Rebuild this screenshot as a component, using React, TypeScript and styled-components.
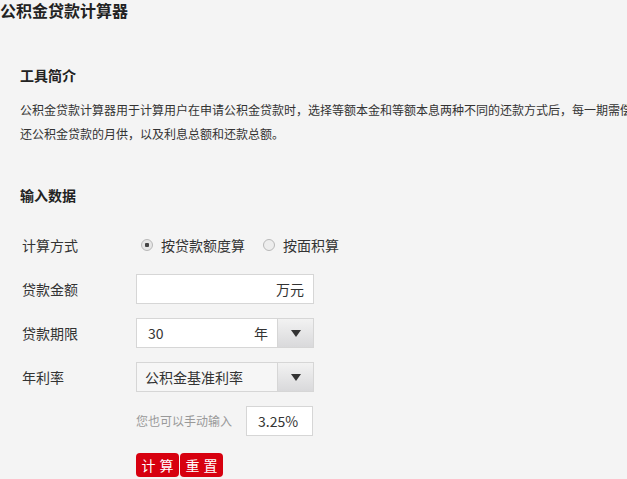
import styled, { createGlobalStyle } from 'styled-components';

const GlobalStyle = createGlobalStyle`
  body {
    margin: 0;
    background: #f4f4f4;
    color: #333;
    font-family: "Noto Sans CJK SC", "Noto Sans", sans-serif;
  }
`;

const Page = styled.div`
  width: 627px;
  height: 479px;
  overflow: hidden;
`;

const PageTitle = styled.h1`
  margin: 0;
  font-size: 16px;
  line-height: 20px;
  font-weight: bold;
  color: #222;
`;

const Section = styled.div`
  padding: 0 20px;
`;

const SectionTitle = styled.h2<{ $top: number }>`
  margin: ${({ $top }) => $top}px 0 0;
  font-size: 14px;
  line-height: 20px;
  font-weight: bold;
  color: #222;
`;

const Intro = styled.p`
  margin: 13px 0 0;
  width: 616px;
  font-size: 12px;
  line-height: 24px;
  color: #333;
`;

const Form = styled.div`
  margin-top: 25px;
  display: flex;
  flex-direction: column;
  gap: 14px;
`;

const Row = styled.div`
  display: flex;
  align-items: center;
  height: 30px;
  padding-left: 2px;
`;

const Label = styled.span`
  width: 114px;
  font-size: 14px;
  line-height: 20px;
`;

const RadioGroup = styled.div`
  display: flex;
  align-items: center;
  padding-left: 5px;
`;

const RadioOption = styled.label`
  display: flex;
  align-items: center;
  font-size: 14px;
  line-height: 20px;
  margin-right: 18px;
`;

const RadioDot = styled.span<{ $checked?: boolean }>`
  box-sizing: border-box;
  width: 12px;
  height: 12px;
  border-radius: 50%;
  border: 1px solid #b8b8b8;
  background: radial-gradient(circle, ${({ $checked }) => ($checked ? '#444 0 2px, #e6e6e6 2.5px' : '#ededed 0')});
  margin-right: 8px;
`;

const Field = styled.div<{ $grey?: boolean; $width?: number }>`
  box-sizing: border-box;
  display: flex;
  align-items: center;
  width: ${({ $width }) => $width ?? 178}px;
  height: 30px;
  border: 1px solid #d6d6d6;
  background: ${({ $grey }) => ($grey ? '#f6f6f6' : '#fff')};
  font-size: 14px;
  line-height: 20px;
`;

const FieldValue = styled.span<{ $left?: number }>`
  flex: 1;
  padding-left: ${({ $left }) => $left ?? 11}px;
`;

const FieldUnit = styled.span`
  padding-right: 9px;
`;

const DropButton = styled.span`
  align-self: stretch;
  width: 35px;
  border-left: 1px solid #d6d6d6;
  background: linear-gradient(#f2f2f2, #d9d9db);
  display: flex;
  align-items: center;
  justify-content: center;
`;

const Arrow = styled.span`
  width: 0;
  height: 0;
  border-left: 5px solid transparent;
  border-right: 5px solid transparent;
  border-top: 7px solid #333;
`;

const Hint = styled.span`
  font-size: 12px;
  line-height: 20px;
  color: #999;
  margin-right: 14px;
`;

const Buttons = styled.div`
  display: flex;
  gap: 1px;
  margin: 17px 0 0 116px;
`;

const RedButton = styled.button`
  width: 43px;
  height: 24px;
  padding: 0 0 0 4px;
  border: none;
  border-radius: 4px;
  background: #d7000f;
  color: #fff;
  font-family: inherit;
  font-size: 14px;
  line-height: 24px;
  letter-spacing: 4px;
`;

export default function App() {
  return (
    <Page>
      <GlobalStyle />
      <PageTitle>公积金贷款计算器</PageTitle>
      <Section>
        <SectionTitle $top={45}>工具简介</SectionTitle>
        <Intro>
          公积金贷款计算器用于计算用户在申请公积金贷款时，选择等额本金和等额本息两种不同的还款方式后，每一期需偿还公积金贷款的月供，以及利息总额和还款总额。
        </Intro>
        <SectionTitle $top={39}>输入数据</SectionTitle>
        <Form>
          <Row>
            <Label>计算方式</Label>
            <RadioGroup>
              <RadioOption>
                <RadioDot $checked />
                按贷款额度算
              </RadioOption>
              <RadioOption>
                <RadioDot />
                按面积算
              </RadioOption>
            </RadioGroup>
          </Row>
          <Row>
            <Label>贷款金额</Label>
            <Field>
              <FieldValue />
              <FieldUnit>万元</FieldUnit>
            </Field>
          </Row>
          <Row>
            <Label>贷款期限</Label>
            <Field>
              <FieldValue>30</FieldValue>
              <FieldUnit>年</FieldUnit>
              <DropButton>
                <Arrow />
              </DropButton>
            </Field>
          </Row>
          <Row>
            <Label>年利率</Label>
            <Field $grey>
              <FieldValue $left={8}>公积金基准利率</FieldValue>
              <DropButton>
                <Arrow />
              </DropButton>
            </Field>
          </Row>
          <Row>
            <Label />
            <Hint>您也可以手动输入</Hint>
            <Field $width={67}>
              <FieldValue>3.25%</FieldValue>
            </Field>
          </Row>
        </Form>
        <Buttons>
          <RedButton>计算</RedButton>
          <RedButton>重置</RedButton>
        </Buttons>
      </Section>
    </Page>
  );
}
